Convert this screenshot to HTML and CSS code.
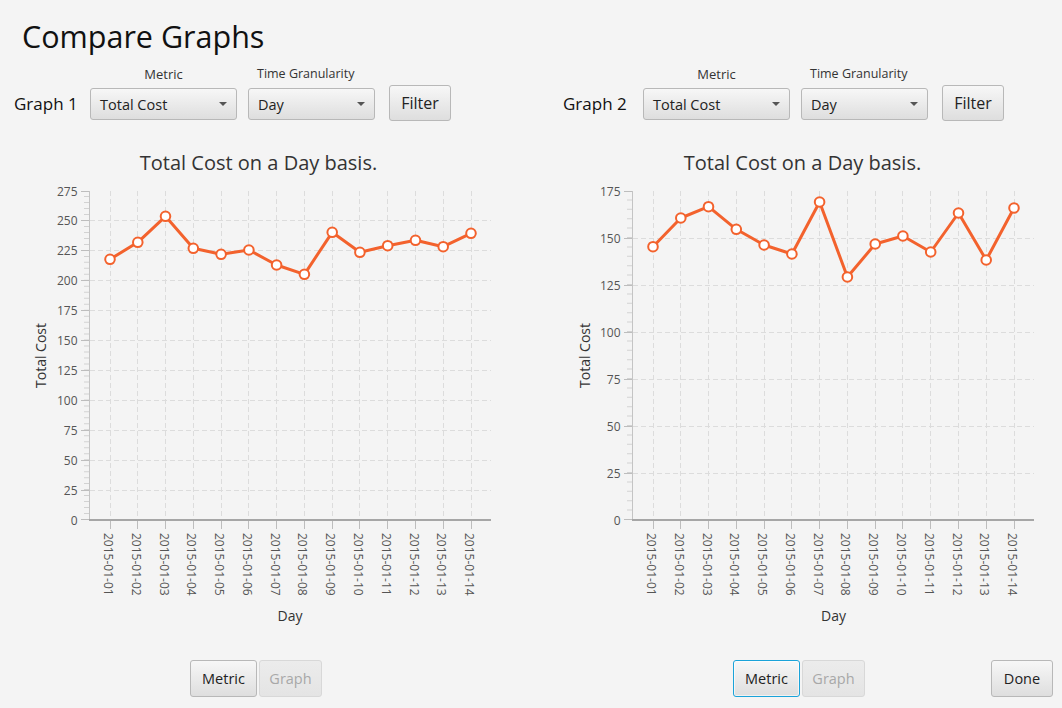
FILE: index.html
```html
<!DOCTYPE html>
<html lang="en">
<head>
<meta charset="utf-8">
<title>Compare Graphs</title>
<link rel="stylesheet" href="styles.css">
</head>
<body>
<h1 class="heading">Compare Graphs</h1>
<main class="panels">
  <section class="panel panel-left">
    <div class="controls">
      <div class="graph-label">Graph 1</div>
      <div class="field">
        <div class="field-label">Metric</div>
        <div class="combo combo-metric"><span>Total Cost</span><span class="arrow"></span></div>
      </div>
      <div class="field">
        <div class="field-label field-label-offset">Time Granularity</div>
        <div class="combo combo-time"><span>Day</span><span class="arrow"></span></div>
      </div>
      <div class="btn filter">Filter</div>
    </div>
    <svg class="chart" viewBox="0 135 531 505" width="531" height="505">
      <text class="chart-title" x="258.5" y="169.5" text-anchor="middle">Total Cost on a Day basis.</text>
      <path class="grid" d="M90 490.5H491M90 460.5H491M90 430.5H491M90 400.5H491M90 370.5H491M90 340.5H491M90 310.5H491M90 280.5H491M90 250.5H491M90 220.5H491"/>
      <path class="grid" d="M110.5 191V519M137.5 191V519M165.5 191V519M193.5 191V519M221.5 191V519M248.5 191V519M276.5 191V519M304.5 191V519M332.5 191V519M359.5 191V519M387.5 191V519M415.5 191V519M443.5 191V519M471.5 191V519"/>
      <path class="minor minor-left" d="M86.5 520V191"/>
      <path class="major" d="M81 490.5H89M81 460.5H89M81 430.5H89M81 400.5H89M81 370.5H89M81 340.5H89M81 310.5H89M81 280.5H89M81 250.5H89M81 220.5H89M81 191.5H89M81 519.5H89"/>
      <path class="axis" d="M89.5 191V520"/>
      <path class="xticks" d="M110.5 521V529M137.5 521V529M165.5 521V529M193.5 521V529M221.5 521V529M248.5 521V529M276.5 521V529M304.5 521V529M332.5 521V529M359.5 521V529M387.5 521V529M415.5 521V529M443.5 521V529M471.5 521V529"/>
      <path class="zero" d="M89 520H491"/>
      <g class="tick" text-anchor="end" dominant-baseline="central">
        <text x="77.5" y="520">0</text>
        <text x="77.5" y="490.1">25</text>
        <text x="77.5" y="460.2">50</text>
        <text x="77.5" y="430.3">75</text>
        <text x="77.5" y="400.4">100</text>
        <text x="77.5" y="370.5">125</text>
        <text x="77.5" y="340.5">150</text>
        <text x="77.5" y="310.6">175</text>
        <text x="77.5" y="280.7">200</text>
        <text x="77.5" y="250.8">225</text>
        <text x="77.5" y="220.9">250</text>
        <text x="77.5" y="191">275</text>
      </g>
      <g class="tick" dominant-baseline="central">
        <text transform="translate(108.5 533) rotate(90)">2015-01-01</text>
        <text transform="translate(136.3 533) rotate(90)">2015-01-02</text>
        <text transform="translate(164 533) rotate(90)">2015-01-03</text>
        <text transform="translate(191.8 533) rotate(90)">2015-01-04</text>
        <text transform="translate(219.6 533) rotate(90)">2015-01-05</text>
        <text transform="translate(247.4 533) rotate(90)">2015-01-06</text>
        <text transform="translate(275.1 533) rotate(90)">2015-01-07</text>
        <text transform="translate(302.9 533) rotate(90)">2015-01-08</text>
        <text transform="translate(330.7 533) rotate(90)">2015-01-09</text>
        <text transform="translate(358.4 533) rotate(90)">2015-01-10</text>
        <text transform="translate(386.2 533) rotate(90)">2015-01-11</text>
        <text transform="translate(414 533) rotate(90)">2015-01-12</text>
        <text transform="translate(441.7 533) rotate(90)">2015-01-13</text>
        <text transform="translate(469.5 533) rotate(90)">2015-01-14</text>
      </g>
      <text class="axis-label" transform="translate(40.5 355.5) rotate(-90)" text-anchor="middle" dominant-baseline="central">Total Cost</text>
      <text class="axis-label" x="290" y="615.5" text-anchor="middle" dominant-baseline="central">Day</text>
      <polyline class="series" points="110,259.3 137.8,242.3 165.5,216.3 193.3,248.3 221.1,254.3 248.9,250 276.6,265 304.4,274.3 332.2,232.3 359.9,252.3 387.7,245.7 415.5,240.3 443.2,246.7 471,233.3"/>
      <g class="marker">
        <circle cx="110" cy="259.3" r="4.8"/>
        <circle cx="137.8" cy="242.3" r="4.8"/>
        <circle cx="165.5" cy="216.3" r="4.8"/>
        <circle cx="193.3" cy="248.3" r="4.8"/>
        <circle cx="221.1" cy="254.3" r="4.8"/>
        <circle cx="248.9" cy="250" r="4.8"/>
        <circle cx="276.6" cy="265" r="4.8"/>
        <circle cx="304.4" cy="274.3" r="4.8"/>
        <circle cx="332.2" cy="232.3" r="4.8"/>
        <circle cx="359.9" cy="252.3" r="4.8"/>
        <circle cx="387.7" cy="245.7" r="4.8"/>
        <circle cx="415.5" cy="240.3" r="4.8"/>
        <circle cx="443.2" cy="246.7" r="4.8"/>
        <circle cx="471" cy="233.3" r="4.8"/>
      </g>
    </svg>
    <div class="actions">
      <div class="btn btn-metric">Metric</div>
      <div class="btn btn-graph disabled">Graph</div>
    </div>
  </section>
  <section class="panel panel-right">
    <div class="controls">
      <div class="graph-label">Graph 2</div>
      <div class="field">
        <div class="field-label">Metric</div>
        <div class="combo combo-metric"><span>Total Cost</span><span class="arrow"></span></div>
      </div>
      <div class="field">
        <div class="field-label field-label-offset">Time Granularity</div>
        <div class="combo combo-time"><span>Day</span><span class="arrow"></span></div>
      </div>
      <div class="btn filter">Filter</div>
    </div>
    <svg class="chart" viewBox="531 135 531 505" width="531" height="505">
      <text class="chart-title" x="802.5" y="169.5" text-anchor="middle">Total Cost on a Day basis.</text>
      <path class="grid" d="M633 473.5H1034M633 426.5H1034M633 379.5H1034M633 332.5H1034M633 285.5H1034M633 238.5H1034"/>
      <path class="grid" d="M653.5 191V519M680.5 191V519M708.5 191V519M736.5 191V519M764.5 191V519M791.5 191V519M819.5 191V519M847.5 191V519M875.5 191V519M902.5 191V519M930.5 191V519M958.5 191V519M986.5 191V519M1014.5 191V519"/>
      <path class="minor minor-right" d="M629.5 520V191"/>
      <path class="major" d="M624 473.5H632M624 426.5H632M624 379.5H632M624 332.5H632M624 285.5H632M624 238.5H632M624 191.5H632M624 519.5H632"/>
      <path class="axis" d="M632.5 191V520"/>
      <path class="xticks" d="M653.5 521V529M680.5 521V529M708.5 521V529M736.5 521V529M764.5 521V529M791.5 521V529M819.5 521V529M847.5 521V529M875.5 521V529M902.5 521V529M930.5 521V529M958.5 521V529M986.5 521V529M1014.5 521V529"/>
      <path class="zero" d="M632 520H1034"/>
      <g class="tick" text-anchor="end" dominant-baseline="central">
        <text x="620.5" y="520">0</text>
        <text x="620.5" y="473">25</text>
        <text x="620.5" y="426">50</text>
        <text x="620.5" y="379">75</text>
        <text x="620.5" y="332">100</text>
        <text x="620.5" y="285">125</text>
        <text x="620.5" y="238">150</text>
        <text x="620.5" y="191">175</text>
      </g>
      <g class="tick" dominant-baseline="central">
        <text transform="translate(651.5 533) rotate(90)">2015-01-01</text>
        <text transform="translate(679.3 533) rotate(90)">2015-01-02</text>
        <text transform="translate(707 533) rotate(90)">2015-01-03</text>
        <text transform="translate(734.8 533) rotate(90)">2015-01-04</text>
        <text transform="translate(762.6 533) rotate(90)">2015-01-05</text>
        <text transform="translate(790.4 533) rotate(90)">2015-01-06</text>
        <text transform="translate(818.1 533) rotate(90)">2015-01-07</text>
        <text transform="translate(845.9 533) rotate(90)">2015-01-08</text>
        <text transform="translate(873.7 533) rotate(90)">2015-01-09</text>
        <text transform="translate(901.4 533) rotate(90)">2015-01-10</text>
        <text transform="translate(929.2 533) rotate(90)">2015-01-11</text>
        <text transform="translate(957 533) rotate(90)">2015-01-12</text>
        <text transform="translate(984.7 533) rotate(90)">2015-01-13</text>
        <text transform="translate(1012.5 533) rotate(90)">2015-01-14</text>
      </g>
      <text class="axis-label" transform="translate(584.5 355.5) rotate(-90)" text-anchor="middle" dominant-baseline="central">Total Cost</text>
      <text class="axis-label" x="833.5" y="615.5" text-anchor="middle" dominant-baseline="central">Day</text>
      <polyline class="series" points="653,246.7 680.8,218 708.5,206.7 736.3,229.3 764.1,245 791.9,254 819.6,202 847.4,277 875.2,244 902.9,236 930.7,252 958.5,213 986.2,260 1014,208"/>
      <g class="marker">
        <circle cx="653" cy="246.7" r="4.8"/>
        <circle cx="680.8" cy="218" r="4.8"/>
        <circle cx="708.5" cy="206.7" r="4.8"/>
        <circle cx="736.3" cy="229.3" r="4.8"/>
        <circle cx="764.1" cy="245" r="4.8"/>
        <circle cx="791.9" cy="254" r="4.8"/>
        <circle cx="819.6" cy="202" r="4.8"/>
        <circle cx="847.4" cy="277" r="4.8"/>
        <circle cx="875.2" cy="244" r="4.8"/>
        <circle cx="902.9" cy="236" r="4.8"/>
        <circle cx="930.7" cy="252" r="4.8"/>
        <circle cx="958.5" cy="213" r="4.8"/>
        <circle cx="986.2" cy="260" r="4.8"/>
        <circle cx="1014" cy="208" r="4.8"/>
      </g>
    </svg>
    <div class="actions">
      <div class="btn btn-metric focused">Metric</div>
      <div class="btn btn-graph disabled">Graph</div>
      <div class="btn btn-done">Done</div>
    </div>
  </section>
</main>
</body>
</html>
```
FILE: styles.css
```css
* { box-sizing: border-box; }

html, body {
  margin: 0;
  padding: 0;
}

body {
  width: 1062px;
  height: 708px;
  overflow: hidden;
  background: #f4f4f4;
  font-family: "Open Sans", "Noto Sans", sans-serif;
  color: #333;
}

.heading {
  margin: 0;
  height: 62px;
  padding: 16px 0 0 22px;
  font-size: 30.5px;
  line-height: 40px;
  font-weight: 400;
  color: #111;
}

.panels {
  display: flex;
}

.panel {
  width: 531px;
  display: flex;
  flex-direction: column;
}

.controls {
  display: flex;
  align-items: flex-end;
  height: 73px;
  padding-top: 4px;
  padding-bottom: 15px;
}

.panel-left .controls { padding-left: 14px; }
.panel-right .controls { padding-left: 32px; }

.graph-label {
  width: 64px;
  height: 32px;
  line-height: 32px;
  margin-right: 12px;
  font-size: 17px;
  color: #111;
  white-space: nowrap;
}

.panel-right .graph-label { margin-right: 16px; }

.field {
  display: flex;
  flex-direction: column;
}

.field + .field { margin-left: 11px; }

.field-label {
  height: 16px;
  line-height: 16px;
  margin-bottom: 6px;
  font-size: 13px;
  text-align: center;
  color: #333;
  white-space: nowrap;
}

.field-label-offset {
  text-align: left;
  padding-left: 9px;
  font-size: 12.5px;
}

.combo {
  height: 32px;
  display: flex;
  align-items: center;
  justify-content: space-between;
  padding: 0 9px 0 9px;
  border: 1px solid #b8b8b8;
  border-radius: 3px;
  background: linear-gradient(#f7f7f7, #dedede);
  font-size: 14.5px;
  color: #222;
}

.combo-metric { width: 147px; }
.combo-time { width: 127px; }

.arrow {
  width: 0;
  height: 0;
  border-left: 4.5px solid transparent;
  border-right: 4.5px solid transparent;
  border-top: 4px solid #555;
}

.btn {
  display: flex;
  align-items: center;
  justify-content: center;
  border: 1px solid #b8b8b8;
  border-radius: 3px;
  background: linear-gradient(#f7f7f7, #dedede);
  color: #222;
  font-size: 14.5px;
}

.filter {
  width: 62px;
  height: 36px;
  margin-left: 14px;
  margin-bottom: -1px;
  font-size: 16px;
}

.chart {
  display: block;
  width: 531px;
  height: 505px;
}

.chart-title {
  font-size: 20px;
  fill: #333;
}

.axis-label {
  font-size: 14px;
  fill: #333;
}

.tick {
  font-size: 12px;
  fill: #555;
}

.grid {
  fill: none;
  stroke: #dcdcdc;
  stroke-width: 1;
  stroke-dasharray: 5 3;
}

.minor {
  fill: none;
  stroke: #d2d2d2;
  stroke-width: 5;
}

.minor-left { stroke-dasharray: 1 4.98; }
.minor-right { stroke-dasharray: 1 8.4; }

.major {
  fill: none;
  stroke: #bdbdbd;
  stroke-width: 1;
}

.axis {
  fill: none;
  stroke: #c4c4c4;
  stroke-width: 1;
}

.xticks {
  fill: none;
  stroke: #bdbdbd;
  stroke-width: 1;
}

.zero {
  fill: none;
  stroke: #a6a6a6;
  stroke-width: 2;
}

.series {
  fill: none;
  stroke: #f3622d;
  stroke-width: 3;
  stroke-linejoin: round;
}

.marker circle {
  fill: #fff;
  stroke: #f3622d;
  stroke-width: 2;
}

.actions {
  display: flex;
  padding-top: 20px;
}

.panel-left .actions { padding-left: 190px; }
.panel-right .actions { padding-left: 202px; padding-right: 9px; }

.actions .btn { height: 37px; }

.btn-metric { width: 67px; }
.btn-graph { width: 63px; margin-left: 2px; }
.btn-done { width: 62px; margin-left: auto; }

.btn.disabled {
  color: #a8a8a8;
  border-color: #d8d8d8;
  background: linear-gradient(#ececec, #e4e4e4);
}

.btn.focused {
  border-color: #1aa3d9;
  box-shadow: inset 0 0 0 1px rgba(255, 255, 255, 0.6);
}
```
